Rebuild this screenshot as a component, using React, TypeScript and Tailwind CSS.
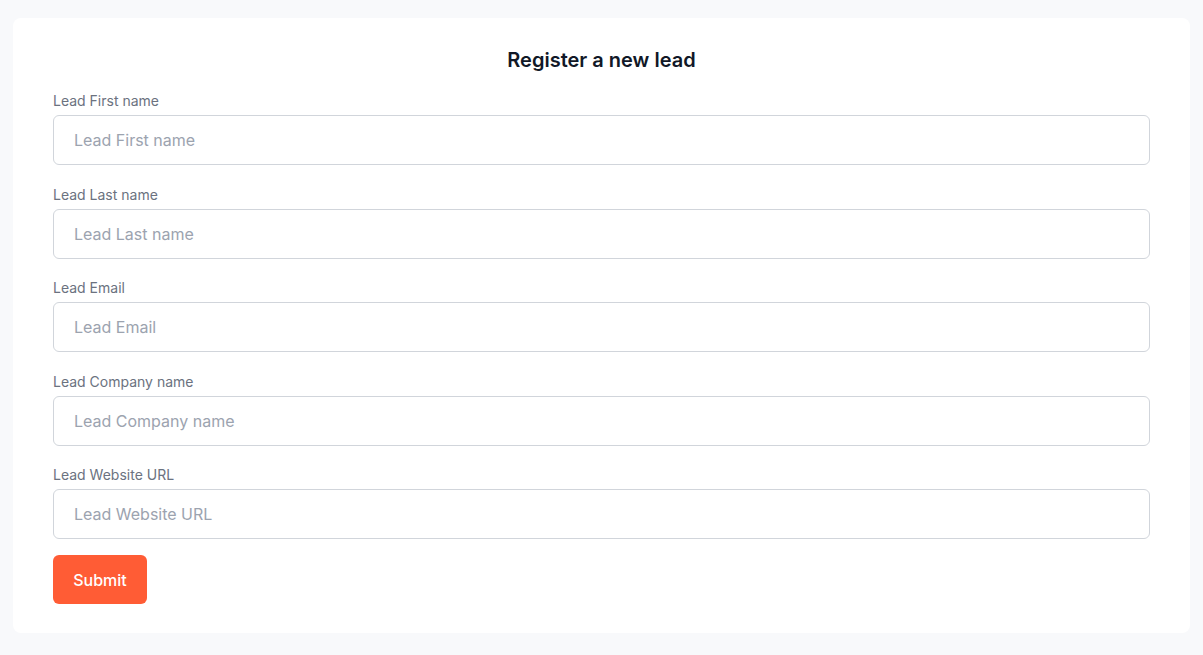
import { useState } from "react";

const fields = [
    { id: "firstName", label: "Lead First name" },
    { id: "lastName", label: "Lead Last name" },
    { id: "email", label: "Lead Email" },
    { id: "company", label: "Lead Company name" },
    { id: "website", label: "Lead Website URL" },
];

export default function App() {
    const [values, setValues] = useState<Record<string, string>>({});

    return (
        <div
            className="min-h-screen bg-[#f8f9fb] px-[13px] pt-[18px] pb-[22px]"
            style={{ fontFamily: "Inter, 'Noto Sans', sans-serif" }}
        >
            <form
                onSubmit={(e) => e.preventDefault()}
                className="bg-white rounded-lg px-10 pt-7 pb-[29px]"
            >
                <h2 className="text-center text-xl leading-7 font-semibold text-[#111827] mb-[17px]">
                    Register a new lead
                </h2>

                <div className="flex flex-col gap-[19.5px]">
                    {fields.map((field) => (
                        <div key={field.id} className="flex flex-col">
                            <label
                                htmlFor={field.id}
                                className="text-sm leading-5 text-[#6b7280] mb-1"
                            >
                                {field.label}
                            </label>
                            <input
                                id={field.id}
                                placeholder={field.label}
                                value={values[field.id] ?? ""}
                                onChange={(e) =>
                                    setValues({ ...values, [field.id]: e.target.value })
                                }
                                className="h-[50px] w-full rounded-md border border-[#d1d5db] px-5 text-base text-[#111827] placeholder:text-[#9ca3af] outline-none"
                            />
                        </div>
                    ))}
                </div>

                <button
                    type="submit"
                    className="mt-4 h-[49px] w-[94px] rounded-md bg-[#ff5c35] text-white text-base font-medium"
                >
                    Submit
                </button>
            </form>
        </div>
    );
}
